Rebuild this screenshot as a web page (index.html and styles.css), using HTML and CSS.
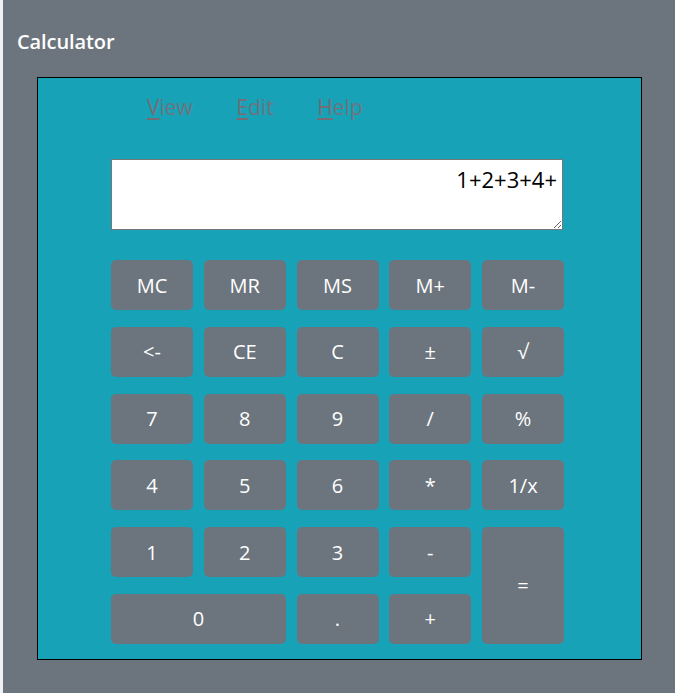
FILE: index.html
```html
<!DOCTYPE html>
<html>
<head>
<meta charset="utf-8">
<link rel="stylesheet" href="styles.css">
</head>
<body>
<div class="page">
  <h1 class="title">Calculator</h1>
  <div class="calc">
    <nav class="menu">
      <span class="menu-item"><u>V</u>iew</span>
      <span class="menu-item"><u>E</u>dit</span>
      <span class="menu-item"><u>H</u>elp</span>
    </nav>
    <textarea class="display">1+2+3+4+</textarea>
    <div class="keys">
      <button class="key">MC</button>
      <button class="key">MR</button>
      <button class="key">MS</button>
      <button class="key">M+</button>
      <button class="key">M-</button>
      <button class="key">&lt;-</button>
      <button class="key">CE</button>
      <button class="key">C</button>
      <button class="key">±</button>
      <button class="key">√</button>
      <button class="key">7</button>
      <button class="key">8</button>
      <button class="key">9</button>
      <button class="key">/</button>
      <button class="key">%</button>
      <button class="key">4</button>
      <button class="key">5</button>
      <button class="key">6</button>
      <button class="key">*</button>
      <button class="key">1/x</button>
      <button class="key">1</button>
      <button class="key">2</button>
      <button class="key">3</button>
      <button class="key">-</button>
      <button class="key key-eq">=</button>
      <button class="key key-zero">0</button>
      <button class="key">.</button>
      <button class="key">+</button>
    </div>
  </div>
</div>
</body>
</html>
```
FILE: styles.css
```css
html, body {
  margin: 0;
  padding: 0;
  background: #eef0f2;
  font-family: "Open Sans", "Noto Sans", sans-serif;
}
.page {
  margin-left: 3px;
  background: #6c757d;
  height: 693px;
  padding-top: 30px;
  box-sizing: border-box;
}
.title {
  margin: 0 0 0 14px;
  font-size: 20px;
  line-height: 24px;
  font-weight: 600;
  color: #ffffff;
  letter-spacing: -0.1px;
}
.calc {
  margin: 23px 0 0 34px;
  width: 605px;
  height: 583px;
  box-sizing: border-box;
  background: #17a2b8;
  border: 1px solid #000000;
  padding: 9px 0 0 73px;
}
.menu {
  display: flex;
  gap: 43.5px;
  height: 40px;
  align-items: center;
  margin-left: 36px;
  font-size: 21px;
  color: #6c757d;
}
.menu-item u {
  text-decoration-thickness: 2px;
  text-underline-offset: 3px;
  color: #7a6b73;
}
.display {
  display: block;
  margin-top: 32px;
  width: 452px;
  height: 71px;
  box-sizing: border-box;
  border: 1px solid #767676;
  padding: 4px 5px;
  font-family: "Open Sans", "Noto Sans", sans-serif;
  font-size: 22px;
  color: #000000;
  text-align: right;
  background: #ffffff;
  resize: both;
}
.keys {
  margin-top: 30px;
  display: grid;
  grid-template-columns: repeat(5, 82px);
  grid-auto-rows: 50px;
  column-gap: 10.75px;
  row-gap: 16.75px;
}
.key {
  background: #6c757d;
  border: none;
  border-radius: 5px;
  color: #ffffff;
  font-family: "Open Sans", "Noto Sans", sans-serif;
  font-size: 20px;
  padding: 0;
}
.key-eq {
  grid-row: span 2;
}
.key-zero {
  grid-column: span 2;
}
```
